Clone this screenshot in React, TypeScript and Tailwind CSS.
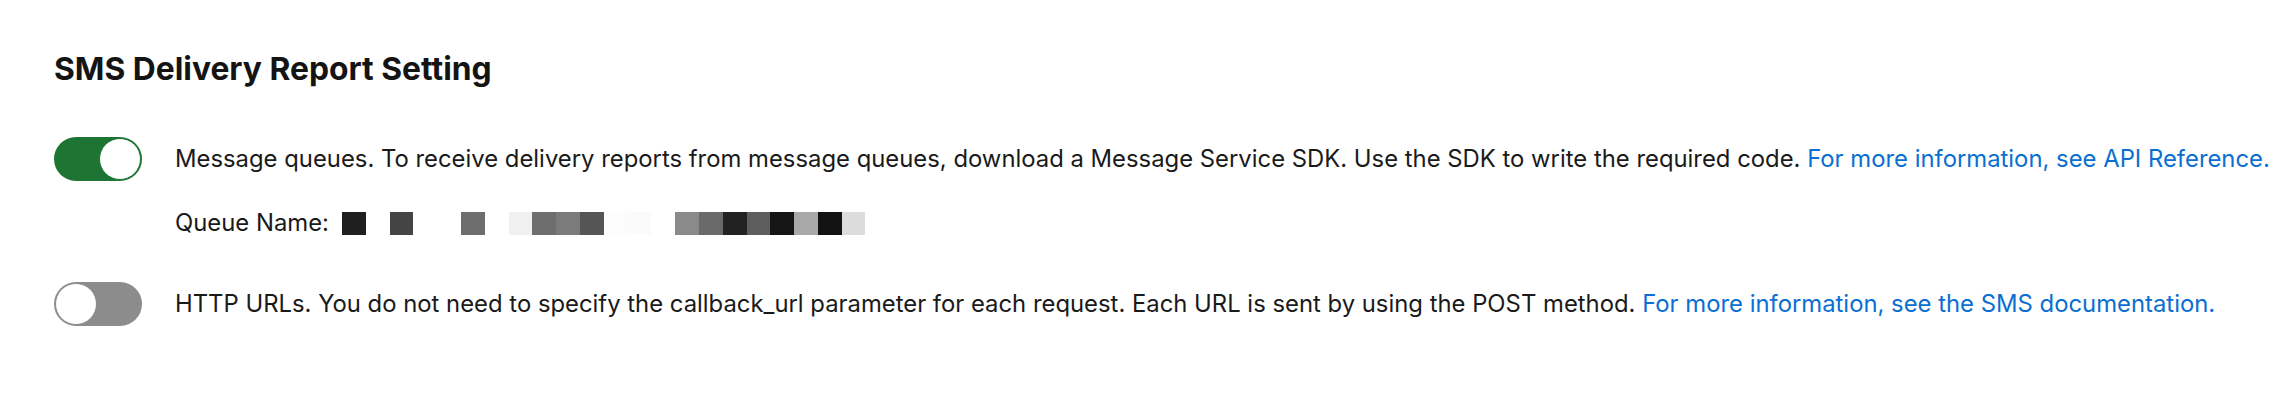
import React from "react";

const cells = [
  "#1f1f1f", "#ffffff", "#444444", "#ffffff", "#ffffff", "#6e6e6e", "#ffffff", "#f0f0f0",
  "#6e6e6e", "#7b7b7b", "#555555", "#fcfcfc", "#fbfbfb", "#ffffff", "#8a8a8a", "#6a6a6a",
  "#222222", "#5e5e5e", "#151515", "#a8a8a8", "#121212", "#dcdcdc",
];

function Toggle({ on }: { on: boolean }) {
  return (
    <div
      className={
        on
          ? "flex h-[44px] w-[88px] shrink-0 items-center justify-end rounded-full bg-[#1d7433] p-[1px]"
          : "flex h-[44px] w-[88px] shrink-0 items-center justify-start rounded-full bg-[#8c8c8c] p-[1px]"
      }
    >
      <div
        className={
          on
            ? "h-[42px] w-[42px] rounded-full border-[1.5px] border-[#1d7433] bg-white"
            : "h-[42px] w-[42px] rounded-full border-[1.5px] border-[#8c8c8c] bg-white"
        }
      />
    </div>
  );
}

export default function App() {
  return (
    <div className="min-h-[414px] w-full bg-white pl-[54px] pt-[52px] font-['Inter','Noto_Sans',sans-serif] text-[#1a1a1a]">
      <h2 className="whitespace-nowrap text-[31.8px] font-bold leading-[34px] text-[#141414]">
        SMS Delivery Report Setting
      </h2>
      <div className="mt-[51px] flex items-center gap-[33px]">
        <Toggle on={true} />
        <p className="whitespace-nowrap text-[23.85px] leading-[30px]">
          Message queues. To receive delivery reports from message queues, download a Message Service SDK. Use the SDK to write the required code.{" "}
          <span className="text-[#0a6fd1]">For more information, see API Reference.</span>
        </p>
      </div>
      <div className="mt-[27px] flex items-center pl-[121px]">
        <span className="text-[23.85px] leading-[30px]">Queue Name:</span>
        <div className="ml-[13px] flex">
          {cells.map((c, i) => (
            <div key={i} className="h-[23px] w-[23.8px]" style={{ backgroundColor: c }} />
          ))}
        </div>
      </div>
      <div className="mt-[44px] flex items-center gap-[33px]">
        <Toggle on={false} />
        <p className="whitespace-nowrap text-[23.85px] leading-[30px]">
          HTTP URLs. You do not need to specify the callback_url parameter for each request. Each URL is sent by using the POST method.{" "}
          <span className="text-[#0a6fd1]">For more information, see the SMS documentation.</span>
        </p>
      </div>
    </div>
  );
}
